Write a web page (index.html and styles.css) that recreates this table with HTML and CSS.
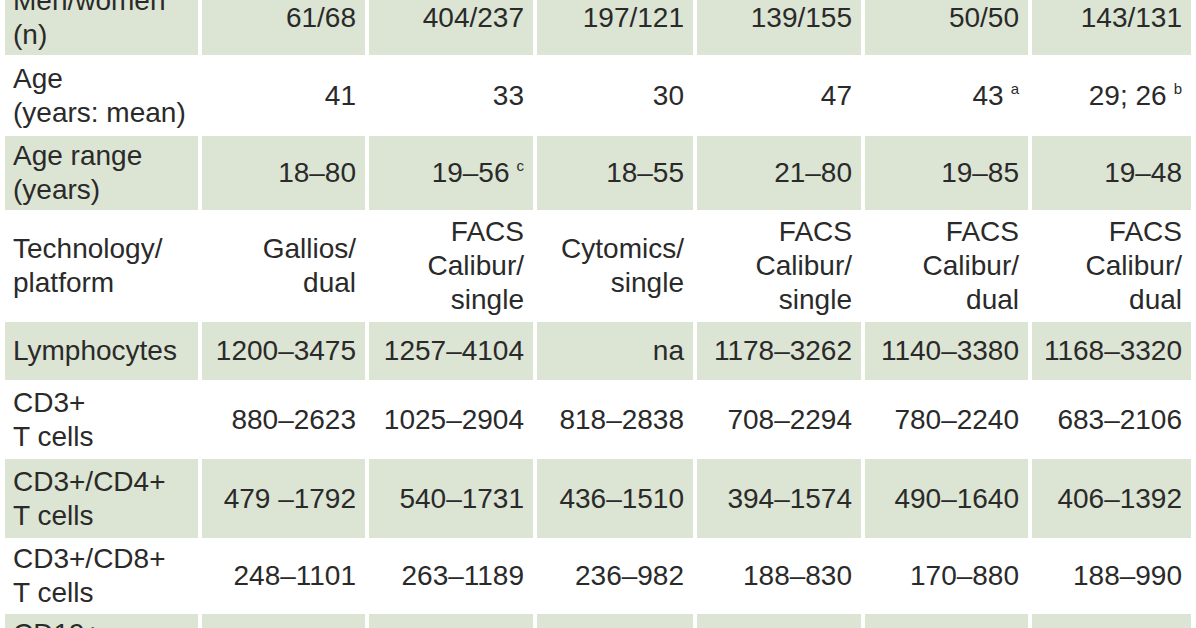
FILE: index.html
```html
<!DOCTYPE html>
<html lang="en">
<head>
<meta charset="utf-8">
<title>Reference values</title>
<link rel="stylesheet" href="styles.css">
</head>
<body>
<table class="ref">
  <colgroup>
    <col class="c1"><col class="c2"><col class="c3"><col class="c4"><col class="c5"><col class="c6"><col class="c7">
  </colgroup>
  <tbody>
    <tr class="shade r1">
      <td>Men/women<br>(n)</td><td>61/68</td><td>404/237</td><td>197/121</td><td>139/155</td><td>50/50</td><td>143/131</td>
    </tr>
    <tr class="r2">
      <td>Age<br>(years: mean)</td><td>41</td><td>33</td><td>30</td><td>47</td><td>43<span class="fn">a</span></td><td>29; 26<span class="fn">b</span></td>
    </tr>
    <tr class="shade r3">
      <td>Age range<br>(years)</td><td>18–80</td><td>19–56<span class="fn">c</span></td><td>18–55</td><td>21–80</td><td>19–85</td><td>19–48</td>
    </tr>
    <tr class="r4">
      <td>Technology/<br>platform</td><td>Gallios/<br>dual</td><td>FACS<br>Calibur/<br>single</td><td>Cytomics/<br>single</td><td>FACS<br>Calibur/<br>single</td><td>FACS<br>Calibur/<br>dual</td><td>FACS<br>Calibur/<br>dual</td>
    </tr>
    <tr class="shade r5">
      <td>Lymphocytes</td><td>1200–3475</td><td>1257–4104</td><td>na</td><td>1178–3262</td><td>1140–3380</td><td>1168–3320</td>
    </tr>
    <tr class="r6">
      <td>CD3+<br>T cells</td><td>880–2623</td><td>1025–2904</td><td>818–2838</td><td>708–2294</td><td>780–2240</td><td>683–2106</td>
    </tr>
    <tr class="shade r7">
      <td>CD3+/CD4+<br>T cells</td><td>479 –1792</td><td>540–1731</td><td>436–1510</td><td>394–1574</td><td>490–1640</td><td>406–1392</td>
    </tr>
    <tr class="r8">
      <td>CD3+/CD8+<br>T cells</td><td>248–1101</td><td>263–1189</td><td>236–982</td><td>188–830</td><td>170–880</td><td>188–990</td>
    </tr>
    <tr class="shade r9">
      <td>CD19+<br>B cells</td><td>110–571</td><td>129–574</td><td>101–596</td><td>93–427</td><td>90–660</td><td>117–642</td>
    </tr>
  </tbody>
</table>
</body>
</html>
```
FILE: styles.css
```css
html, body {
  margin: 0;
  padding: 0;
  background: #ffffff;
  overflow: hidden;
}

.ref {
  margin: -19px 0 0 1px;
  border-collapse: separate;
  border-spacing: 4px 0;
  table-layout: fixed;
  width: 1194px;
  font-family: "Liberation Sans", Arial, sans-serif;
  font-size: 28px;
  line-height: 34px;
  color: #2a2a2a;
}

.c1 { width: 193px; }
.c2 { width: 163px; }
.c3 { width: 164px; }
.c4 { width: 156px; }
.c5 { width: 164px; }
.c6 { width: 163px; }
.c7 { width: 159px; }

.ref td {
  box-sizing: border-box;
  padding: 0 9px 0 9px;
  vertical-align: middle;
  text-align: right;
  white-space: nowrap;
}

.ref td:first-child {
  text-align: left;
  padding-left: 8px;
}

.shade td {
  background: #dce4d3;
}

.r1 { height: 74px; }
.r2 { height: 81px; }
.r3 { height: 74px; }
.r4 { height: 112px; }
.r5 { height: 58px; }
.r6 { height: 79px; }
.r7 { height: 79px; }
.r8 { height: 76px; }
.r9 { height: 74px; }

.fn {
  font-size: 15px;
  line-height: 0;
  vertical-align: 11px;
  margin-left: 7px;
}
```
